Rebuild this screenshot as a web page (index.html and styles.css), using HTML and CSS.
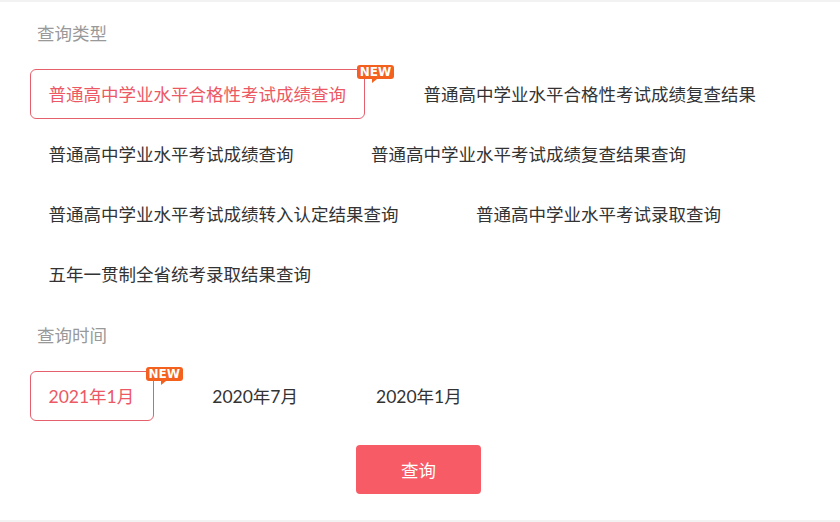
FILE: index.html
```html
<!DOCTYPE html>
<html lang="zh-CN">
<head>
    <meta charset="UTF-8">
    <meta name="viewport" content="width=device-width, initial-scale=1.0">
    <title>查询</title>
    <link rel="stylesheet" href="styles.css">
</head>
<body>
    <div class="query-panel">
        <h2 class="section-title">查询类型</h2>
        <div class="option-list type-list">
            <div class="option active">普通高中学业水平合格性考试成绩查询<span class="new-badge">NEW</span></div>
            <div class="option">普通高中学业水平合格性考试成绩复查结果</div>
            <div class="option">普通高中学业水平考试成绩查询</div>
            <div class="option">普通高中学业水平考试成绩复查结果查询</div>
            <div class="option">普通高中学业水平考试成绩转入认定结果查询</div>
            <div class="option">普通高中学业水平考试录取查询</div>
            <div class="option">五年一贯制全省统考录取结果查询</div>
        </div>

        <h2 class="section-title">查询时间</h2>
        <div class="option-list date-list">
            <div class="option active">2021年1月<span class="new-badge">NEW</span></div>
            <div class="option">2020年7月</div>
            <div class="option">2020年1月</div>
        </div>

        <button class="query-button">查询</button>
    </div>
</body>
</html>
```

FILE: styles.css
```css
body {
    margin: 0;
    background-color: #fff;
    font-family: Lato, "Noto Sans CJK SC", sans-serif;
}

.query-panel {
    height: 518px;
    padding: 0 33px 0 30px;
    border-top: 2px solid #f2f2f2;
    border-bottom: 2px solid #f2f2f2;
}

.section-title {
    margin: 0 0 22px;
    padding: 19px 0 0 7px;
    font-size: 17.5px;
    line-height: 26px;
    font-weight: 400;
    color: #999;
}

.option-list {
    display: flex;
    flex-wrap: wrap;
    column-gap: 40px;
    row-gap: 10px;
}

.type-list {
    margin-top: 5px;
    margin-bottom: 5px;
}

.option {
    position: relative;
    box-sizing: border-box;
    height: 50px;
    padding: 0 18px 0 17.5px;
    border: 1px solid transparent;
    border-radius: 6px;
    font-size: 17.5px;
    line-height: 50px;
    color: #333;
    white-space: nowrap;
}

.date-list .option {
    padding: 0 18.5px 0 17.5px;
}

.option.active {
    border-color: #e5606c;
    color: #ec5864;
}

.new-badge {
    position: absolute;
    top: -5px;
    right: -30px;
    width: 37px;
    height: 14px;
    border-radius: 3px;
    background-color: #f4601d;
    color: #fff;
    font-family: "DejaVu Sans", sans-serif;
    font-size: 12px;
    font-weight: 700;
    line-height: 14px;
    text-align: center;
}

.new-badge::after {
    content: "";
    position: absolute;
    left: 15px;
    top: 14px;
    border-top: 4px solid #f4601d;
    border-right: 5px solid transparent;
}

.query-button {
    display: block;
    width: 125px;
    height: 49px;
    margin: 24px auto 0;
    border: none;
    border-radius: 4px;
    background-color: #f65b66;
    color: #fff;
    font-family: inherit;
    font-size: 17.5px;
}
```
